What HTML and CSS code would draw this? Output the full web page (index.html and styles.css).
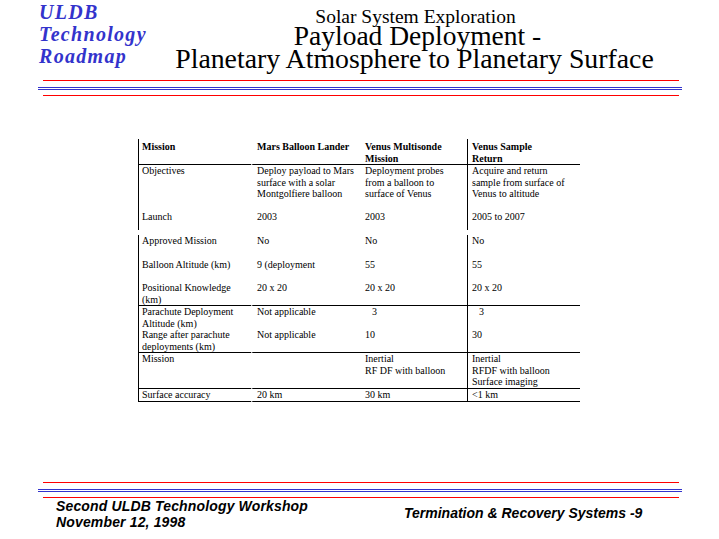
FILE: index.html
```html
<!DOCTYPE html>
<html lang="en">
<head>
<meta charset="utf-8">
<title>Payload Deployment - Planetary Atmosphere to Planetary Surface</title>
<link rel="stylesheet" href="styles.css">
</head>
<body>
<div class="slide">
  <header class="header">
    <div class="logo">
      <div>ULDB</div>
      <div>Technology</div>
      <div>Roadmap</div>
    </div>
    <div class="title">
      <div class="t1">Solar System Exploration</div>
      <div class="t2">Payload Deployment -</div>
      <div class="t3">Planetary Atmosphere to Planetary Surface</div>
    </div>
  </header>

  <div class="rules">
    <div class="rule red"></div>
    <div class="rule blue first-blue"></div>
    <div class="rule blue second-blue"></div>
    <div class="rule red last-red"></div>
  </div>

  <table class="roadmap">
    <colgroup>
      <col class="w1"><col class="w2"><col class="w3"><col class="w4">
    </colgroup>
    <tr class="r-head ruled">
      <th>Mission</th>
      <th>Mars Balloon Lander</th>
      <th>Venus Multisonde<br>Mission</th>
      <th>Venus Sample<br>Return</th>
    </tr>
    <tr class="r-obj">
      <td>Objectives</td>
      <td>Deploy payload to Mars<br>surface with a solar<br>Montgolfiere balloon</td>
      <td>Deployment probes<br>from a balloon to<br>surface of Venus</td>
      <td>Acquire and return<br>sample from surface of<br>Venus to altitude</td>
    </tr>
    <tr class="r-launch">
      <td>Launch</td>
      <td>2003</td>
      <td>2003</td>
      <td>2005 to 2007</td>
    </tr>
    <tr class="r-gap">
      <td></td><td></td><td></td><td></td>
    </tr>
    <tr class="r-appr">
      <td>Approved Mission</td>
      <td>No</td>
      <td>No</td>
      <td>No</td>
    </tr>
    <tr class="r-alt">
      <td>Balloon Altitude (km)</td>
      <td>9 (deployment</td>
      <td>55</td>
      <td>55</td>
    </tr>
    <tr class="r-pos ruled">
      <td>Positional Knowledge<br>(km)</td>
      <td>20 x 20</td>
      <td>20 x 20</td>
      <td>20 x 20</td>
    </tr>
    <tr class="r-para">
      <td>Parachute Deployment<br>Altitude (km)</td>
      <td>Not applicable</td>
      <td><span class="indent">3</span></td>
      <td><span class="indent">3</span></td>
    </tr>
    <tr class="r-range ruled">
      <td>Range after parachute<br>deployments (km)</td>
      <td>Not applicable</td>
      <td>10</td>
      <td>30</td>
    </tr>
    <tr class="r-mission ruled">
      <td>Mission</td>
      <td></td>
      <td>Inertial<br>RF DF with balloon</td>
      <td>Inertial<br>RFDF with balloon<br>Surface imaging</td>
    </tr>
    <tr class="r-surf ruled">
      <td>Surface accuracy</td>
      <td>20 km</td>
      <td>30 km</td>
      <td>&lt;1 km</td>
    </tr>
  </table>

  <div class="rules bottom-rules">
    <div class="rule red"></div>
    <div class="rule blue first-blue"></div>
    <div class="rule blue second-blue"></div>
    <div class="rule red last-red"></div>
  </div>

  <footer class="footer">
    <div class="foot-left">
      <div>Second ULDB Technology Workshop</div>
      <div>November 12, 1998</div>
    </div>
    <div class="foot-right">Termination &amp; Recovery Systems -9</div>
  </footer>
</div>
</body>
</html>
```

FILE: styles.css
```css
html, body {
  margin: 0;
  padding: 0;
  background: #ffffff;
}

.slide {
  width: 719px;
  height: 539px;
  overflow: hidden;
  position: relative;
  background: #ffffff;
}

/* ---------- header ---------- */
.header {
  display: flex;
  height: 80px;
}

.logo {
  width: 112px;
  padding-left: 39px;
  padding-top: 1px;
  box-sizing: content-box;
  font-family: "Liberation Serif", "Times New Roman", serif;
  font-weight: bold;
  font-style: italic;
  font-size: 20px;
  line-height: 22px;
  color: #3333cc;
  letter-spacing: 1.3px;
}

.title {
  flex: 1;
  padding-top: 8.6px;
  padding-right: 39px;
  text-align: center;
  font-family: "Liberation Serif", "Times New Roman", serif;
  color: #000000;
}

.t1 {
  font-size: 19.5px;
  line-height: 15.6px;
  height: 15.6px;
}

.t2 {
  font-size: 27.5px;
  line-height: 23px;
  height: 23px;
  padding-left: 4px;
}

.t3 {
  font-size: 27.8px;
  line-height: 23px;
  height: 23px;
  padding-right: 2px;
}

/* ---------- rules ---------- */
.rules {
  display: flex;
  flex-direction: column;
}

.rule {
  height: 1px;
}

.rule.red {
  background: #ff0000;
  margin-left: 43px;
  margin-right: 40px;
}

.rule.blue {
  background: #3333cc;
  margin-left: 38px;
  margin-right: 37px;
}

.first-blue { margin-top: 6px; }
.second-blue { margin-top: 1px; }
.last-red { margin-top: 5px; }

.bottom-rules {
  margin-top: 80px;
}

/* ---------- table ---------- */
.roadmap {
  margin-top: 43px;
  margin-left: 138px;
  width: 442px;
  table-layout: fixed;
  border-collapse: separate;
  border-spacing: 0;
  font-family: "Liberation Serif", "Times New Roman", serif;
  font-size: 10px;
  line-height: 11.5px;
  color: #000000;
}

.w1 { width: 113px; }
.w2 { width: 110px; }
.w3 { width: 106px; }
.w4 { width: 113px; }

.roadmap th,
.roadmap td {
  box-sizing: border-box;
  padding: 0 0 0 4px;
  vertical-align: top;
  text-align: left;
  white-space: nowrap;
  overflow: hidden;
}

.roadmap th {
  font-weight: bold;
  padding-top: 2px;
}

.roadmap th:first-child,
.roadmap td:first-child {
  border-left: 1px solid #000000;
  padding-left: 3px;
}

.roadmap th:nth-child(2),
.roadmap td:nth-child(2) {
  border-left: 2px solid #ffffff;
}

.roadmap th:nth-child(4),
.roadmap td:nth-child(4) {
  border-left: 1px solid #000000;
}

.roadmap .r-gap td {
  border-left-color: #ffffff;
}

.roadmap .ruled th,
.roadmap .ruled td {
  border-bottom: 1px solid #000000;
}

.r-head th { height: 25px; }
.r-obj td { height: 46px; }
.r-launch td { height: 19px; }
.r-gap td { height: 5px; }
.r-appr td { height: 24px; }
.r-alt td { height: 23px; }
.r-pos td { height: 23px; }
.r-para td { height: 23px; }
.r-range td { height: 24px; }
.r-mission td { height: 35px; }
.r-surf td { height: 13px; }

.indent {
  padding-left: 7px;
}

/* ---------- footer ---------- */
.footer {
  display: grid;
  grid-template-columns: 348px auto;
  padding-left: 56px;
  font-family: "Liberation Sans", Arial, sans-serif;
  font-weight: bold;
  font-style: italic;
  font-size: 14px;
  line-height: 16px;
  color: #000000;
}

.foot-left {
  letter-spacing: 0.15px;
}

.foot-right {
  padding-top: 7px;
}
```
